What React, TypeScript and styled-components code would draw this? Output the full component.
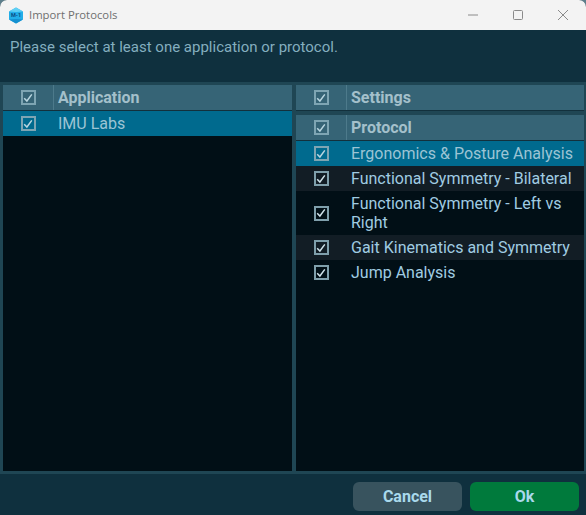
import styled, { createGlobalStyle } from 'styled-components';

const GlobalStyle = createGlobalStyle`
  html, body {
    margin: 0;
    padding: 0;
    background: #5d7f8c;
  }
`;

const applications = ['IMU Labs'];

const protocols = [
  { name: 'Ergonomics & Posture Analysis', tone: 'selected', tall: false },
  { name: 'Functional Symmetry - Bilateral', tone: 'alt', tall: false },
  { name: 'Functional Symmetry - Left vs Right', tone: 'plain', tall: true },
  { name: 'Gait Kinematics and Symmetry', tone: 'alt', tall: false },
  { name: 'Jump Analysis', tone: 'plain', tall: false },
] as const;

const CheckIcon = () => (
  <svg width="10" height="10" viewBox="0 0 10 10" fill="none">
    <path d="M1.2 5.2 L3.9 8 L8.8 1.4" stroke="currentColor" strokeWidth="1.5" />
  </svg>
);

const AppIcon = () => (
  <svg width="16" height="17" viewBox="0 0 16 17">
    <path d="M8 0.5 L15 4.5 V12.5 L8 16.5 L1 12.5 V4.5 Z" fill="#22aee8" />
    <path d="M8 0.5 L15 4.5 L8 5 L1 4.5 Z" fill="#5fd0f5" />
    <path d="M1 12.5 L8 12 L15 12.5 L8 16.5 Z" fill="#1590d0" />
    <text x="8" y="10.4" textAnchor="middle" fontSize="5.5" fontWeight="700" fill="#0d4f86" fontFamily="Roboto, sans-serif">
      M-1
    </text>
  </svg>
);

const Check = ({ dim }: { dim?: boolean }) => (
  <CheckBox $dim={dim}>
    <CheckIcon />
  </CheckBox>
);

const App = () => {
  return (
    <Window>
      <GlobalStyle />
      <TitleBar>
        <TitleLeft>
          <AppIcon />
          <TitleText>Import Protocols</TitleText>
        </TitleLeft>
        <WindowButtons>
          <WindowButton>
            <svg width="10" height="10" viewBox="0 0 10 10">
              <path d="M0 5 H10" stroke="#8a8a8a" strokeWidth="1" />
            </svg>
          </WindowButton>
          <WindowButton>
            <svg width="10" height="10" viewBox="0 0 10 10">
              <rect x="0.5" y="0.5" width="9" height="9" rx="1" fill="none" stroke="#8a8a8a" />
            </svg>
          </WindowButton>
          <WindowButton>
            <svg width="10" height="10" viewBox="0 0 10 10">
              <path d="M0 0 L10 10 M10 0 L0 10" stroke="#8a8a8a" strokeWidth="1" />
            </svg>
          </WindowButton>
        </WindowButtons>
      </TitleBar>

      <Message>Please select at least one application or protocol.</Message>

      <Panels>
        <Panel>
          <HeaderRow>
            <CheckCell>
              <Check dim />
            </CheckCell>
            <HeaderLabel>Application</HeaderLabel>
          </HeaderRow>
          {applications.map((name) => (
            <Row key={name} $tone="selected">
              <CheckCell>
                <Check dim />
              </CheckCell>
              <RowLabel $tone="selected">{name}</RowLabel>
            </Row>
          ))}
        </Panel>

        <Panel>
          <SettingsHeader>
            <CheckCell>
              <Check dim />
            </CheckCell>
            <HeaderLabel>Settings</HeaderLabel>
          </SettingsHeader>
          <HeaderRow>
            <CheckCell>
              <Check dim />
            </CheckCell>
            <HeaderLabel>Protocol</HeaderLabel>
          </HeaderRow>
          {protocols.map((p) => (
            <Row key={p.name} $tone={p.tone} $tall={p.tall}>
              <CheckCell>
                <Check dim={p.tone === 'selected'} />
              </CheckCell>
              <RowLabel $tone={p.tone}>{p.name}</RowLabel>
            </Row>
          ))}
        </Panel>
      </Panels>

      <Footer>
        <CancelButton>Cancel</CancelButton>
        <OkButton>Ok</OkButton>
      </Footer>
    </Window>
  );
};

export default App;

const Window = styled.div`
  width: 586px;
  height: 515px;
  display: flex;
  flex-direction: column;
  overflow: hidden;
  border-radius: 7px 7px 0 0;
  background: #0f303e;
  font-family: Roboto, 'Liberation Sans', sans-serif;
`;

const TitleBar = styled.div`
  height: 30px;
  flex: none;
  display: flex;
  align-items: center;
  justify-content: space-between;
  background: #f3f3f3;
`;

const TitleLeft = styled.div`
  display: flex;
  align-items: center;
  gap: 5px;
  padding-left: 8px;
`;

const TitleText = styled.span`
  font-family: 'Open Sans', 'Liberation Sans', sans-serif;
  font-size: 11.3px;
  line-height: 14px;
  margin-top: -1px;
  color: #6f6f6f;
`;

const WindowButtons = styled.div`
  display: flex;
  padding-right: 1px;
`;

const WindowButton = styled.div`
  width: 45px;
  height: 30px;
  display: flex;
  align-items: center;
  justify-content: center;
`;

const Message = styled.div`
  height: 52px;
  flex: none;
  box-sizing: border-box;
  padding: 8px 10px 0;
  font-size: 15px;
  line-height: 18px;
  color: #84aebf;
`;

const Panels = styled.div`
  flex: 1;
  min-height: 0;
  display: grid;
  grid-template-columns: 289px 288px;
  gap: 4px;
  padding: 3px 2px 3px 3px;
  background: #1f4654;
`;

const Panel = styled.div`
  display: flex;
  flex-direction: column;
  background: #010f16;
  overflow: hidden;
`;

const CheckCell = styled.div`
  width: 50px;
  flex: none;
  display: flex;
  align-items: center;
  justify-content: center;
`;

const HeaderRow = styled.div`
  height: 25px;
  flex: none;
  display: flex;
  align-items: stretch;
  background: #366476;
  border-bottom: 1px solid #12303c;
  ${CheckCell} {
    border-right: 1px solid #4d7a8b;
  }
`;

const SettingsHeader = styled(HeaderRow)`
  margin-bottom: 4px;
  box-shadow: 0 4px 0 #1f4654;
`;

const HeaderLabel = styled.div`
  display: flex;
  align-items: center;
  padding-left: 4px;
  font-size: 16px;
  font-weight: 700;
  color: #a4c0cb;
`;

const Row = styled.div<{ $tone: 'selected' | 'alt' | 'plain'; $tall?: boolean }>`
  height: ${(p) => (p.$tall ? '44px' : '25px')};
  flex: none;
  display: flex;
  align-items: center;
  background: ${(p) =>
    p.$tone === 'selected' ? '#006a8e' : p.$tone === 'alt' ? '#121d25' : 'transparent'};
`;

const RowLabel = styled.div<{ $tone: 'selected' | 'alt' | 'plain' }>`
  padding-left: 5px;
  padding-right: 8px;
  font-size: 16px;
  line-height: 19px;
  color: ${(p) => (p.$tone === 'selected' ? '#9cc4d4' : '#a0cce2')};
`;

const CheckBox = styled.span<{ $dim?: boolean }>`
  width: 15px;
  height: 15px;
  box-sizing: border-box;
  display: flex;
  align-items: center;
  justify-content: center;
  border: 2px solid ${(p) => (p.$dim ? '#7ea5b3' : '#7f9fab')};
  color: ${(p) => (p.$dim ? '#b9d6e0' : '#cfe2e9')};
`;

const Footer = styled.div`
  height: 41px;
  flex: none;
  display: flex;
  justify-content: flex-end;
  align-items: flex-start;
  gap: 8px;
  padding: 8px 7px 0 0;
  box-sizing: border-box;
`;

const FooterButton = styled.button`
  width: 109px;
  height: 29px;
  border: none;
  border-radius: 6px;
  font-family: inherit;
  font-size: 16px;
  font-weight: 700;
  color: #a9d9ec;
  padding: 0;
`;

const CancelButton = styled(FooterButton)`
  background: #38535e;
`;

const OkButton = styled(FooterButton)`
  background: #007a3c;
`;
